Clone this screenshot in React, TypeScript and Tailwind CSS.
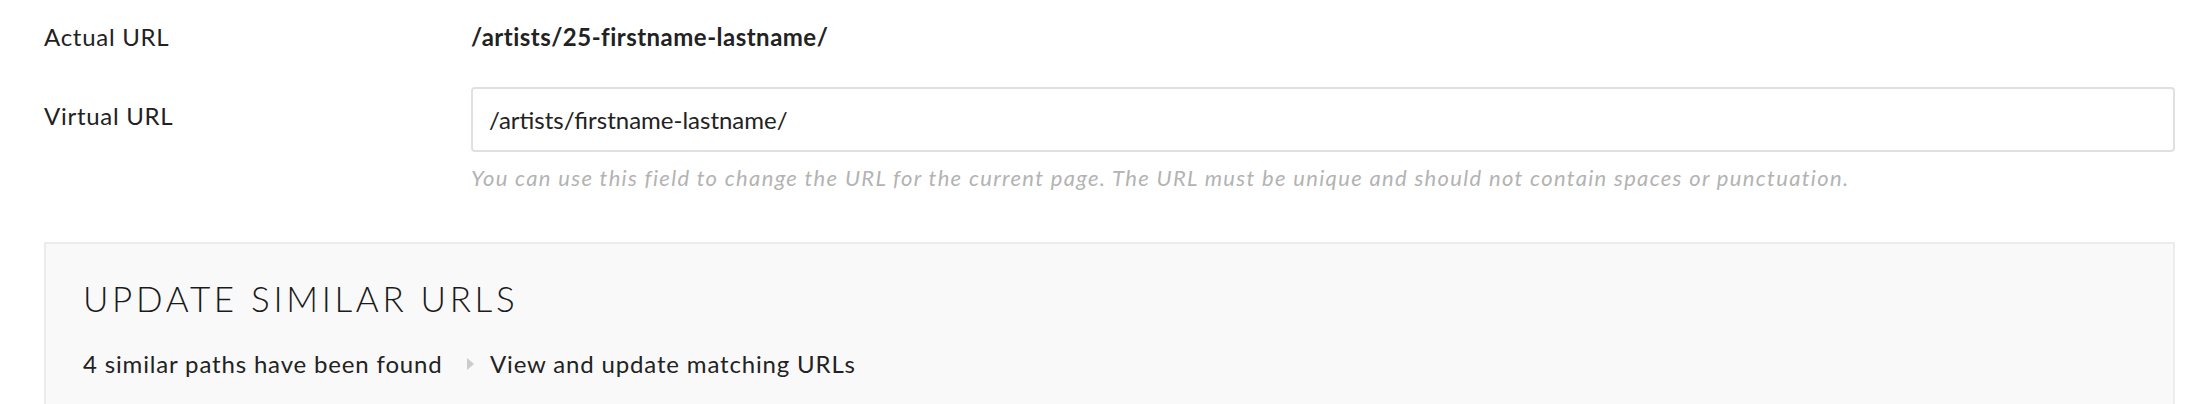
import React from "react";

export default function App() {
  return (
    <div
      className="w-[2212px] h-[404px] overflow-hidden bg-white pl-[44px] pr-[37px] pt-[20px] text-[#222222] tracking-[0.015em]"
      style={{ fontFamily: "Lato, 'Open Sans', sans-serif" }}
    >
      <div className="flex items-start">
        <div className="w-[427px] shrink-0 text-[24px] leading-[34px] tracking-[0.03em]">Actual URL</div>
        <div className="text-[24px] leading-[34px] font-bold tracking-[0.02em]">/artists/25-firstname-lastname/</div>
      </div>
      <div className="flex items-start mt-[33px]">
        <div className="w-[427px] shrink-0 text-[24px] leading-[34px] pt-[12px] tracking-[0.03em]">Virtual URL</div>
        <div className="flex-1 min-w-0">
          <div className="h-[65px] border-2 border-[#e0e0e0] rounded-[4px] flex items-center px-[16px] text-[24px] tracking-normal bg-white">
            /artists/firstname-lastname/
          </div>
          <div className="mt-[13px] text-[22px] italic text-[#b3b3b3] leading-[26px] tracking-[0.06em]">
            You can use this field to change the URL for the current page. The URL must be unique and should not contain spaces or punctuation.
          </div>
        </div>
      </div>
      <div className="mt-[51px] bg-[#f9f9f9] border-2 border-b-0 border-[#ececec] h-[200px] pl-[37px] pt-[32px]">
        <div className="text-[35px] leading-[44px] tracking-[0.105em] font-light text-[#1a1a1a]">UPDATE SIMILAR URLS</div>
        <div className="mt-[27px] flex items-center text-[24px] leading-[34px] tracking-[0.035em]">
          <span className="w-[384px] shrink-0">4 similar paths have been found</span>
          <span className="mr-[16px] inline-block w-0 h-0 border-y-[6px] border-y-transparent border-l-[7px] border-l-[#cccccc]" />
          <span>View and update matching URLs</span>
        </div>
      </div>
    </div>
  );
}
